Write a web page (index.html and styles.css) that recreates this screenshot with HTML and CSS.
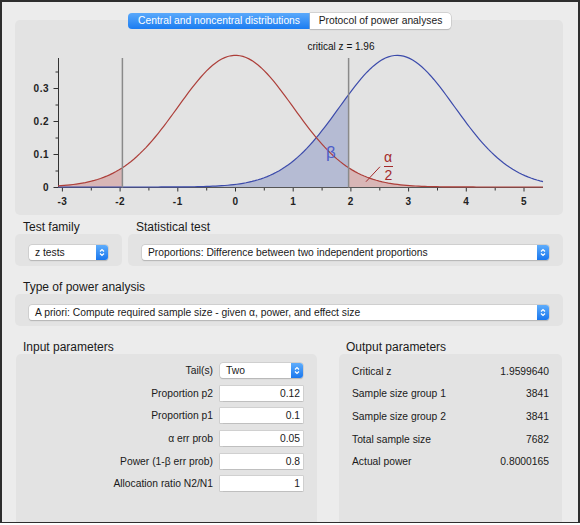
FILE: index.html
```html
<!DOCTYPE html>
<html lang="en">
<head>
    <meta charset="UTF-8">
    <meta name="viewport" content="width=device-width, initial-scale=1.0">
    <title>G*Power</title>
    <link rel="stylesheet" href="styles.css">
</head>
<body>
    <div class="window">

        <div class="plot-panel">
            <div class="tabs">
                <div class="tab tab-active">Central and noncentral distributions</div>
                <div class="tab tab-plain">Protocol of power analyses</div>
            </div>

            <svg class="plot" width="548" height="186" viewBox="0 0 548 186">
                <path id="beta-area" fill="#b5bbd3"></path>
                <path id="alpha-left" fill="#d8b6b6"></path>
                <path id="alpha-right" fill="#d8b6b6"></path>

                <path id="ticks" stroke="#333" stroke-width="1" fill="none"></path>
                <line x1="43.5" y1="29" x2="43.5" y2="158.5" stroke="#333" stroke-width="1"></line>
                <line x1="43" y1="158.5" x2="528" y2="158.5" stroke="#555" stroke-width="1"></line>

                <path id="curve-blue" stroke="#3c4bab" stroke-width="1.2" fill="none"></path>
                <path id="curve-red" stroke="#ad3f3a" stroke-width="1.2" fill="none"></path>

                <line class="crit" x1="107.4" y1="29" x2="107.4" y2="158.5"></line>
                <line class="crit" x1="333.6" y1="29" x2="333.6" y2="158.5"></line>

                <g class="axis-text">
                    <text x="34" y="161.5">0</text>
                    <text x="34" y="128.5">0.1</text>
                    <text x="34" y="95.5">0.2</text>
                    <text x="34" y="62.5">0.3</text>
                </g>
                <g class="axis-text axis-x">
                    <text x="47.4" y="175.5">-3</text>
                    <text x="105.1" y="175.5">-2</text>
                    <text x="162.8" y="175.5">-1</text>
                    <text x="220.5" y="175.5">0</text>
                    <text x="278.2" y="175.5">1</text>
                    <text x="335.9" y="175.5">2</text>
                    <text x="393.6" y="175.5">3</text>
                    <text x="451.3" y="175.5">4</text>
                    <text x="509" y="175.5">5</text>
                </g>

                <text class="crit-label" x="326" y="21">critical z = 1.96</text>

                <text class="beta-label" x="316" y="129">β</text>
                <text class="alpha-label" x="373" y="133">α</text>
                <line x1="369" y1="137.5" x2="378" y2="137.5" stroke="#a32a2a" stroke-width="1"></line>
                <text class="alpha-label" x="373.5" y="151">2</text>
                <line x1="351" y1="152.7" x2="365" y2="137.7" stroke="#a32a2a" stroke-width="1"></line>
            </svg>
        </div>

        <div class="test-row">
            <div class="group">
                <div class="group-title">Test family</div>
                <div class="box">
                    <div class="popup">
                        <span class="popup-text">z tests</span>
                        <span class="stepper"><svg width="8" height="11" viewBox="0 0 8 11"><path d="M2 4.5L4 2.5L6 4.5M2 6.5L4 8.5L6 6.5" stroke="#fff" stroke-width="1.2" fill="none"/></svg></span>
                    </div>
                </div>
            </div>
            <div class="group">
                <div class="group-title">Statistical test</div>
                <div class="box">
                    <div class="popup">
                        <span class="popup-text">Proportions: Difference between two independent proportions</span>
                        <span class="stepper"><svg width="8" height="11" viewBox="0 0 8 11"><path d="M2 4.5L4 2.5L6 4.5M2 6.5L4 8.5L6 6.5" stroke="#fff" stroke-width="1.2" fill="none"/></svg></span>
                    </div>
                </div>
            </div>
        </div>

        <div class="group type-group">
            <div class="group-title">Type of power analysis</div>
            <div class="box">
                <div class="popup">
                    <span class="popup-text">A priori: Compute required sample size - given α, power, and effect size</span>
                    <span class="stepper"><svg width="8" height="11" viewBox="0 0 8 11"><path d="M2 4.5L4 2.5L6 4.5M2 6.5L4 8.5L6 6.5" stroke="#fff" stroke-width="1.2" fill="none"/></svg></span>
                </div>
            </div>
        </div>

        <div class="params">
            <div class="group">
                <div class="group-title">Input parameters</div>
                <div class="box param-box input-box">
                    <div class="param-label">Tail(s)</div>
                    <div class="popup">
                        <span class="popup-text">Two</span>
                        <span class="stepper"><svg width="8" height="11" viewBox="0 0 8 11"><path d="M2 4.5L4 2.5L6 4.5M2 6.5L4 8.5L6 6.5" stroke="#fff" stroke-width="1.2" fill="none"/></svg></span>
                    </div>
                    <div class="param-label">Proportion p2</div>
                    <div class="field">0.12</div>
                    <div class="param-label">Proportion p1</div>
                    <div class="field">0.1</div>
                    <div class="param-label">α err prob</div>
                    <div class="field">0.05</div>
                    <div class="param-label">Power (1-β err prob)</div>
                    <div class="field">0.8</div>
                    <div class="param-label">Allocation ratio N2/N1</div>
                    <div class="field">1</div>
                </div>
            </div>
            <div class="group">
                <div class="group-title">Output parameters</div>
                <div class="box param-box output-box">
                    <div>Critical z</div>
                    <div class="out-value">1.9599640</div>
                    <div>Sample size group 1</div>
                    <div class="out-value">3841</div>
                    <div>Sample size group 2</div>
                    <div class="out-value">3841</div>
                    <div>Total sample size</div>
                    <div class="out-value">7682</div>
                    <div>Actual power</div>
                    <div class="out-value">0.8000165</div>
                </div>
            </div>
        </div>

    </div>

    <script src="chart.js"></script>
</body>
</html>
```

FILE: styles.css
```css
*{
    box-sizing: border-box;
}

body{
    margin: 0;
    background-color: #fff;
    font-family: "Liberation Sans", Arial, sans-serif;
    color: #1a1a1a;
}

.window{
    width: 580px;
    height: 523px;
    border: 2px solid #2e2e2e;
    border-bottom-width: 1px;
    background-color: #ececec;
    overflow: hidden;
}

/* 그래프 영역 */
.plot-panel{
    width: 548px;
    height: 195px;
    margin: 18px 0 0 13px;
    background-color: #e3e3e3;
    border-radius: 5px;
    display: flex;
    flex-direction: column;
    align-items: center;
}

.tabs{
    display: flex;
    height: 16px;
    margin-top: -7px;
    margin-left: 1px;
}

.tab{
    font-size: 10.3px;
    line-height: 16px;
    text-align: center;
}

.tab-active{
    width: 182px;
    color: #fff;
    background: linear-gradient(#5aa9fb, #1b7cf1);
    border-radius: 4px 0 0 4px;
}

.tab-plain{
    width: 141px;
    background-color: #fff;
    border-radius: 0 4px 4px 0;
    box-shadow: 0 0 0 0.5px #bdbdbd, 0 0.5px 1px rgba(0, 0, 0, 0.2);
}

.plot{
    display: block;
    align-self: flex-start;
}

.crit{
    stroke: #8a8a8a;
    stroke-width: 1.5;
}

.axis-text text{
    font-size: 10px;
    font-weight: bold;
    letter-spacing: 0.5px;
    fill: #222;
    text-anchor: end;
}

.axis-x text{
    text-anchor: middle;
}

.crit-label{
    font-size: 10px;
    fill: #111;
    text-anchor: middle;
}

.beta-label{
    font-size: 17px;
    fill: #4e5ec9;
    text-anchor: middle;
}

.alpha-label{
    font-size: 14px;
    fill: #a32a2a;
    text-anchor: middle;
}

/* 입력 영역 */
.test-row{
    display: grid;
    grid-template-columns: 107px 435px;
    column-gap: 6px;
    margin: 5px 0 0 13px;
}

.group-title{
    font-size: 12px;
    line-height: 14px;
    padding-left: 8px;
}

.box{
    background-color: #e3e3e3;
    border-radius: 5px;
    padding: 11px 14px 6px;
}

.popup{
    height: 15px;
    display: flex;
    align-items: center;
    padding-left: 6px;
    font-size: 10.3px;
    background-color: #fff;
    border-radius: 3px;
    box-shadow: 0 0 0 0.5px #c2c2c2, 0 0.5px 1px rgba(0, 0, 0, 0.25);
}

.popup-text{
    flex: 1;
    white-space: nowrap;
}

.stepper{
    width: 12px;
    height: 15px;
    display: flex;
    align-items: center;
    justify-content: center;
    background: linear-gradient(#5eadfc, #1a77ee);
    border-radius: 0 3px 3px 0;
}

.type-group{
    width: 548px;
    margin: 14px 0 0 13px;
}

.params{
    display: grid;
    grid-template-columns: 301px 223px;
    column-gap: 22px;
    margin: 14px 0 0 14px;
}

.params .group-title{
    padding-left: 7px;
}

.param-box{
    height: 200px;
    display: grid;
    grid-auto-rows: 15px;
    row-gap: 7.7px;
    align-content: start;
    font-size: 10.3px;
    line-height: 15px;
}

.input-box{
    grid-template-columns: 1fr 83px;
    column-gap: 7px;
    padding: 9px 14px 0 0;
}

.param-label{
    text-align: right;
}

.field{
    text-align: right;
    padding-right: 3px;
    background-color: #fff;
    box-shadow: 0 0 0 0.5px #bdbdbd, 0 0.5px 1px rgba(0, 0, 0, 0.15);
}

.output-box{
    grid-template-columns: 1fr auto;
    padding: 9.5px 13px 0;
}

.out-value{
    text-align: right;
}
```

FILE: chart.js
```js
// 좌표 변환 (z 값, 밀도 -> 픽셀)
const X0 = 220.5, SX = 57.7;
const Y0 = 158, SY = 330;
const DELTA = 2.8016;
const CRIT = 1.96;

const zMin = (43 - X0) / SX;
const zMax = (528 - X0) / SX;

function px(z) {
    return X0 + SX * z;
}

function py(d) {
    return Y0 - SY * d;
}

function pdf(z, mean) {
    return Math.exp(-0.5 * (z - mean) * (z - mean)) / Math.sqrt(2 * Math.PI);
}

function points(mean, a, b) {
    const pts = [];
    const steps = 160;
    for (let i = 0; i <= steps; i++) {
        const z = a + (b - a) * i / steps;
        pts.push(px(z).toFixed(2) + "," + py(pdf(z, mean)).toFixed(2));
    }
    return pts;
}

function curve(mean, a, b) {
    return "M" + points(mean, a, b).join("L");
}

function area(mean, a, b) {
    return "M" + px(a).toFixed(2) + "," + Y0 + "L" + points(mean, a, b).join("L") +
        "L" + px(b).toFixed(2) + "," + Y0 + "Z";
}

document.getElementById("curve-red").setAttribute("d", curve(0, zMin, zMax));
document.getElementById("curve-blue").setAttribute("d", curve(DELTA, zMin, zMax));
document.getElementById("alpha-left").setAttribute("d", area(0, zMin, -CRIT));
document.getElementById("alpha-right").setAttribute("d", area(0, CRIT, zMax));
document.getElementById("beta-area").setAttribute("d", area(DELTA, zMin, CRIT));

// 눈금
let ticks = "";
for (let i = 0; i <= 7; i++) {
    const y = (py(i * 0.05) + 0.5).toFixed(1);
    const len = i % 2 === 0 ? 5 : 3;
    ticks += "M" + (43.5 - len) + "," + y + "H43.5";
}
for (let z = -3; z <= 5; z += 0.5) {
    const x = px(z).toFixed(1);
    const len = Number.isInteger(z) ? 4 : 3;
    ticks += "M" + x + ",158.5V" + (158.5 + len);
}
document.getElementById("ticks").setAttribute("d", ticks);
```
